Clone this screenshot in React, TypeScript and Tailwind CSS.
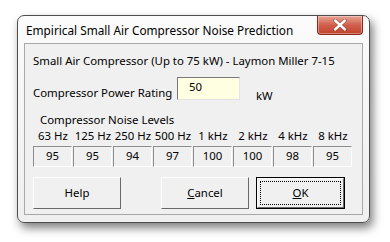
import React from "react";

const freqs = ["63 Hz", "125 Hz", "250 Hz", "500 Hz", "1 kHz", "2 kHz", "4 kHz", "8 kHz"];
const levels = ["95", "95", "94", "97", "100", "100", "98", "95"];

function CloseButton() {
  return (
    <div className="flex h-[19px] w-[46px] items-center justify-center rounded-b-[4px] border border-t-0 border-[#8a2a1e] bg-gradient-to-b from-[#e9a393] via-[#d0604d] to-[#c0412d] shadow-[inset_0_0_0_1px_rgba(255,255,255,0.35)]">
      <svg width="14" height="12" viewBox="0 0 14 12">
        <path d="M2 1.5 L12 10.5 M12 1.5 L2 10.5" stroke="#5a1a10" strokeWidth="3.6" strokeLinecap="round" opacity="0.55" />
        <path d="M2 1.5 L12 10.5 M12 1.5 L2 10.5" stroke="#ffffff" strokeWidth="2.4" strokeLinecap="round" />
      </svg>
    </div>
  );
}

function DlgButton({ children, isDefault }: { children: React.ReactNode; isDefault?: boolean }) {
  if (isDefault) {
    return (
      <div className="h-[32px] w-[89px] border border-black">
        <div className="flex h-full w-full items-center justify-center border border-t-white border-l-white border-b-[#696969] border-r-[#696969] bg-[#f0f0f0] p-[2px]">
          <div className="flex h-full w-full items-center justify-center border border-dotted border-black">
            {children}
          </div>
        </div>
      </div>
    );
  }
  return (
    <div className="h-[32px] w-[88px] border border-t-white border-l-white border-b-[#696969] border-r-[#696969] shadow-[inset_-1px_-1px_0_#a0a0a0]">
      <div className="flex h-full w-full items-center justify-center bg-[#f0f0f0]">{children}</div>
    </div>
  );
}

export default function App() {
  return (
    <div className="h-[242px] w-[390px] bg-white pl-[17px] pt-[15px] font-['Noto_Sans',sans-serif] text-[11.4px] text-black">
      <div className="flex h-[208px] w-[353px] flex-col rounded-[7px] border border-[#4d4d4d] bg-gradient-to-b from-[#fbfbfb] to-[#efefef] shadow-[3px_5px_10px_rgba(0,0,0,0.5)]">
        {/* title bar */}
        <div className="flex h-[27px] items-start justify-between pl-[8px] pr-[6px]">
          <span className="mt-[6px] text-[11.8px] leading-[16px]">Empirical Small Air Compressor Noise Prediction</span>
          <CloseButton />
        </div>

        {/* client area */}
        <div className="mx-[6px] mb-[7px] flex-1 border border-[#a8a8a8] bg-[#f0f0f0] pl-[8px]">
          <div className="mt-[9px] whitespace-nowrap leading-[16px]">Small Air Compressor (Up to 75 kW) - Laymon Miller 7-15</div>

          <div className="mt-[8px] flex items-start">
            <span className="mt-[8px] w-[144px] whitespace-nowrap leading-[16px]">Compressor Power Rating</span>
            <div className="h-[23px] w-[63px] border border-t-[#7a7a7a] border-l-[#7a7a7a] border-b-[#e3e3e3] border-r-[#e3e3e3] bg-[#ffffe1] pl-[11px] leading-[18px]">
              50
            </div>
            <span className="ml-[16px] mt-[11px] leading-[16px]">kW</span>
          </div>

          <div className="mt-[8px] pl-[7px] leading-[16px]">Compressor Noise Levels</div>

          <div className="flex">
            {freqs.map((f) => (
              <div key={f} className="w-[40px] whitespace-nowrap text-center leading-[16px]">
                {f}
              </div>
            ))}
          </div>

          <div className="mt-[2px] flex">
            {levels.map((v, i) => (
              <div key={i} className="w-[40px] pr-[1px]">
                <div className="h-[21px] border border-t-[#8c8c8c] border-l-[#8c8c8c] border-b-white border-r-white text-center leading-[18px]">
                  {v}
                </div>
              </div>
            ))}
          </div>

          <div className="mt-[10px] flex">
            <DlgButton>Help</DlgButton>
            <div className="ml-[40px]">
              <DlgButton>
                <span>
                  <span className="underline">C</span>ancel
                </span>
              </DlgButton>
            </div>
            <div className="ml-[7px]">
              <DlgButton isDefault>
                <span>
                  <span className="underline">O</span>K
                </span>
              </DlgButton>
            </div>
          </div>
        </div>
      </div>
    </div>
  );
}
